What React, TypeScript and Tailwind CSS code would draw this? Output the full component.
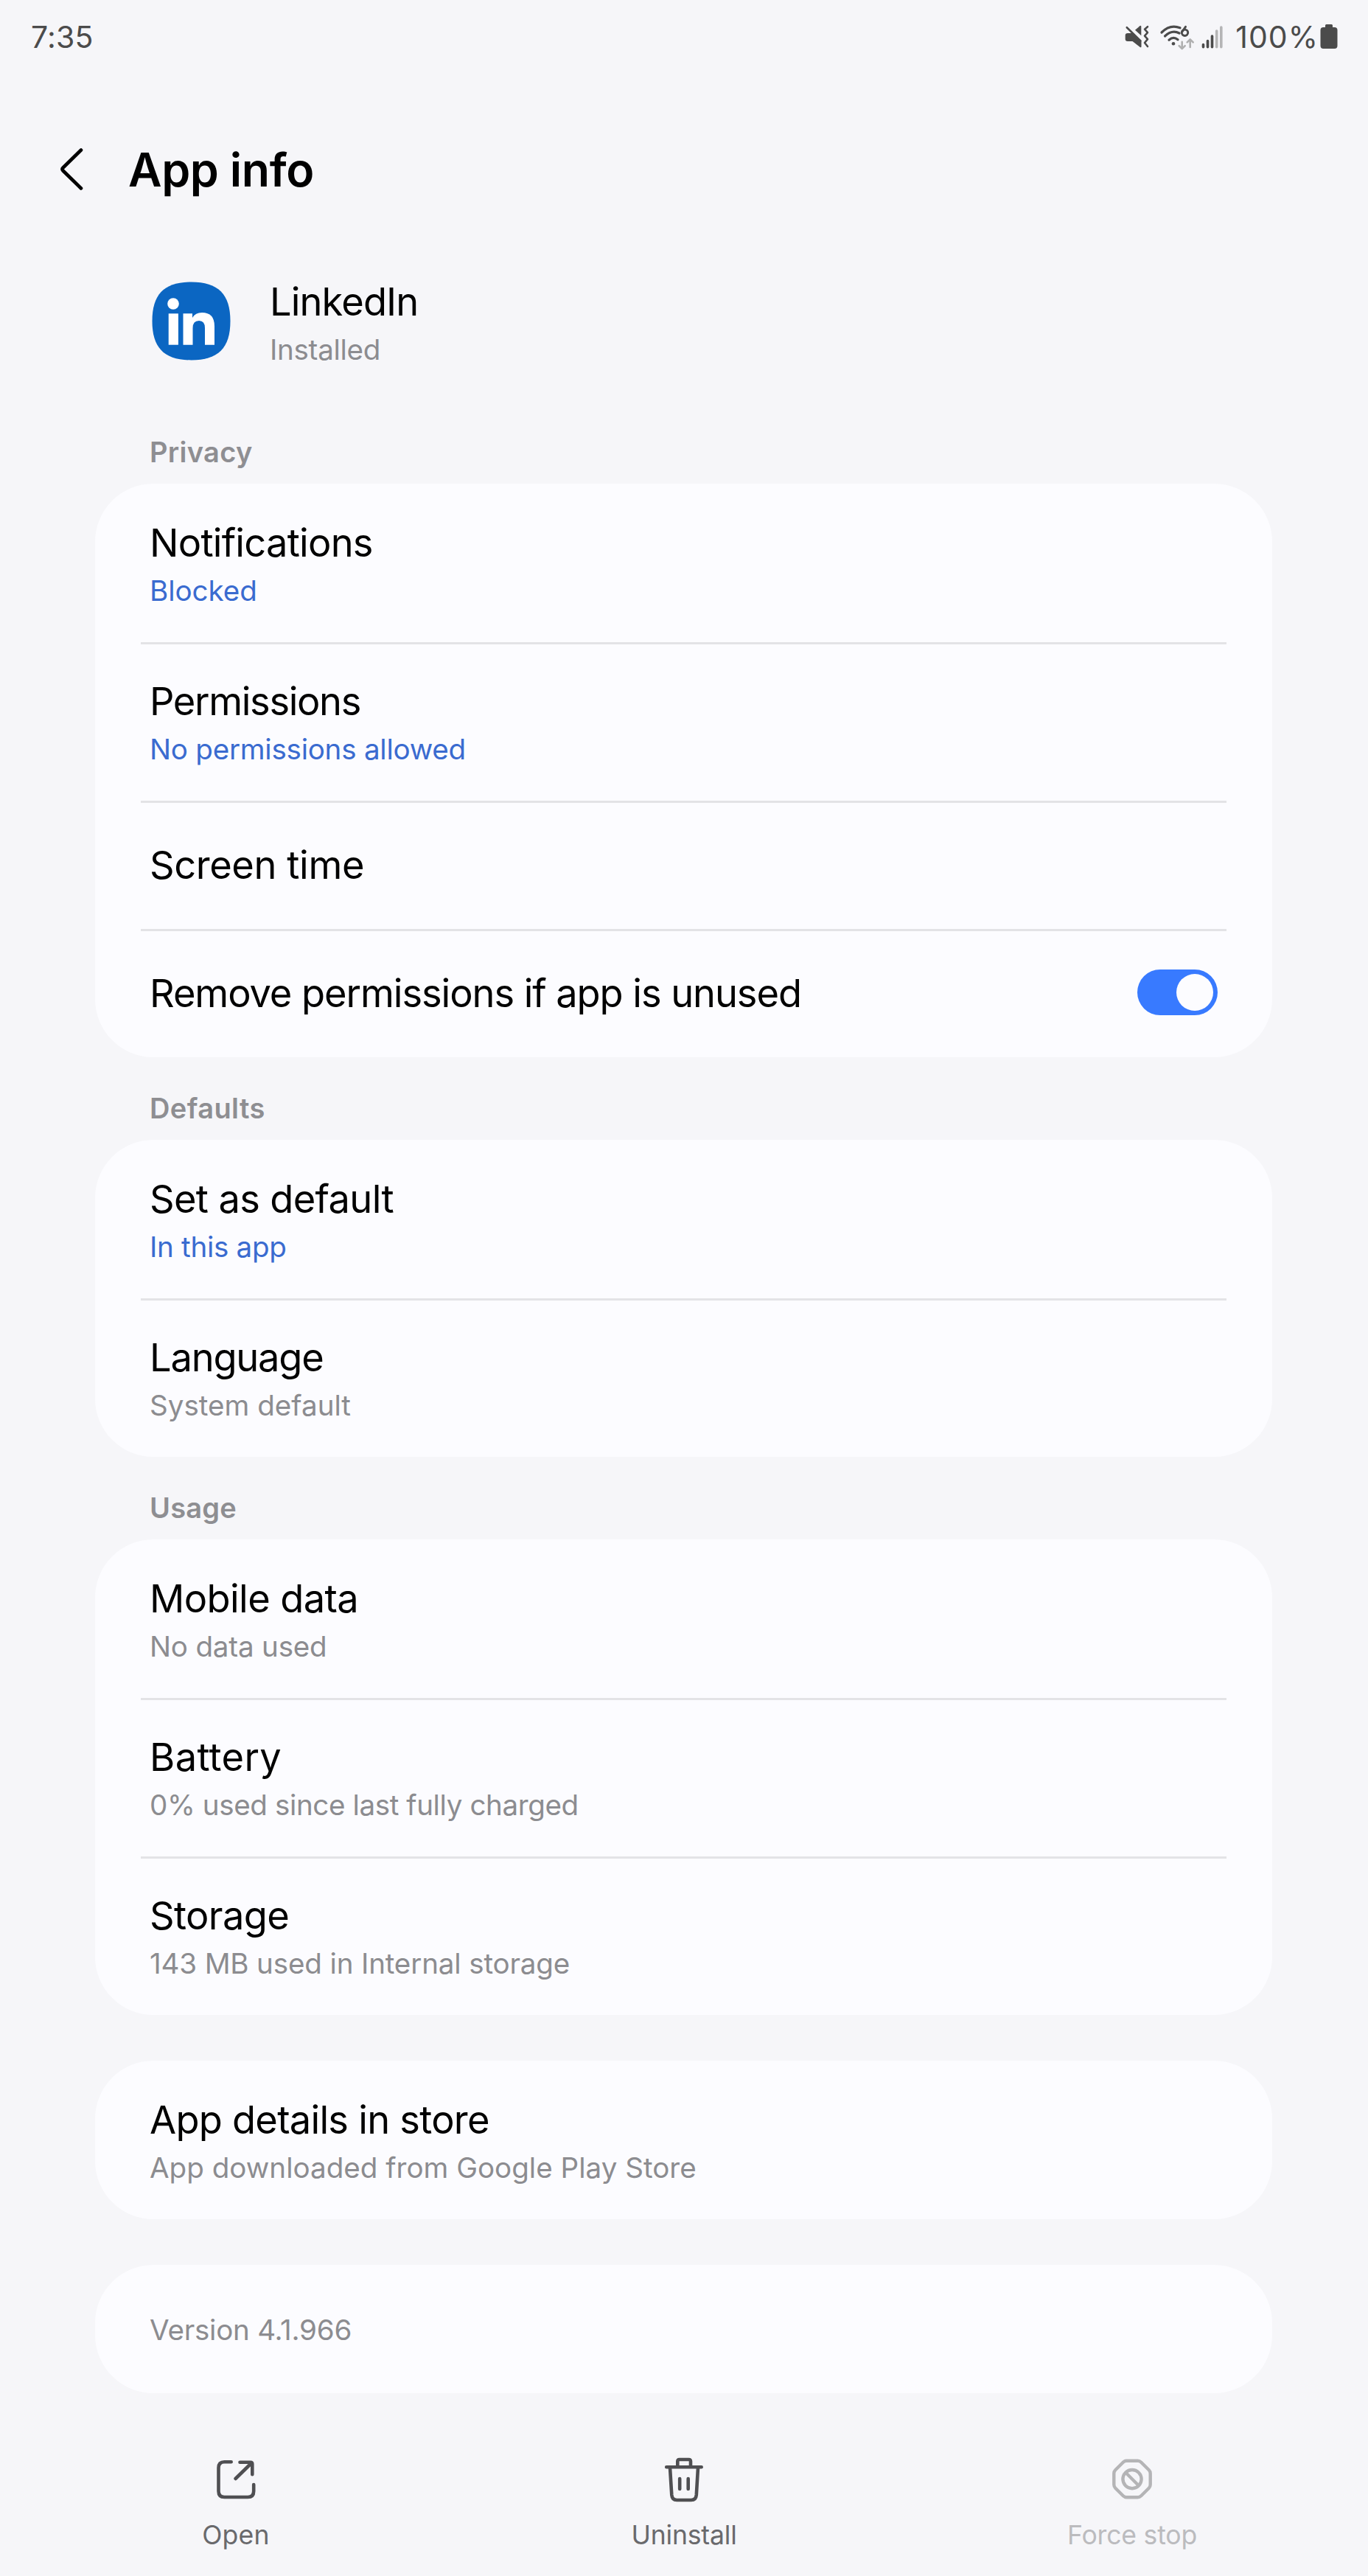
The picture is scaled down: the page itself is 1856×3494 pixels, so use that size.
import type { ReactNode } from "react";

type RowProps = {
  title: string;
  track?: string;
  sub?: string;
  subTrack?: string;
  accent?: boolean;
  first?: boolean;
  trailing?: ReactNode;
};

function Row({ title, track = "", sub, subTrack = "", accent, first, trailing }: RowProps) {
  return (
    <div className={`flex flex-col px-[62px] ${sub ? "h-[215px]" : "h-[174px]"}`}>
      <div className={`h-[3px] shrink-0 ${first ? "" : "bg-[#e3e3e6]"}`} />
      <div className={`flex items-start justify-between px-3 ${sub ? "pt-[45px]" : "pt-[52px]"}`}>
        <div>
          <div className={`text-[52.4px] leading-[64px] whitespace-nowrap text-black ${track}`}>{title}</div>
          {sub && (
            <div
              className={`mt-[9px] text-[38.6px] leading-[48px] whitespace-nowrap ${
                accent ? "text-[#3a6bd0]" : "text-[#8c8c90]"
              } ${subTrack}`}
            >
              {sub}
            </div>
          )}
        </div>
        {trailing}
      </div>
    </div>
  );
}

function Card({ children }: { children: ReactNode }) {
  return <section className="rounded-[79px] bg-[#fcfcff]">{children}</section>;
}

function SectionLabel({ children, track }: { children: ReactNode; track: string }) {
  return (
    <h2 className={`h-[112px] pt-[45px] pl-[74px] text-[38px] leading-[48px] font-semibold text-[#8e8e92] ${track}`}>
      {children}
    </h2>
  );
}

function Toggle() {
  return (
    <div className="flex h-[62px] w-[109px] items-center justify-end rounded-full bg-[#387aff] pr-[6px]">
      <div className="size-[50px] rounded-full bg-[#fcfcff]" />
    </div>
  );
}

function StatusIcons() {
  return (
    <svg width="140" height="40" viewBox="0 0 140 40" fill="none" strokeLinecap="round" strokeLinejoin="round">
      {/* muted speaker with vibration */}
      <path d="M4 15h6l12.500 11.500V33q0 1.800-1.700.9L10.500 26H4q-3.300 0-3.300-3v-5q0-3 3.300-3z" fill="#4b4b4b" />
      <path d="M14 10.700L20.500 5.300q1.800-1.200 1.800.9V18.300z" fill="#4b4b4b" />
      <path d="M2.800 7.200L21.500 25.500" stroke="#4b4b4b" strokeWidth="2.600" />
      <path d="M31 6.200L27 9.700 31 14.200 27 18.700 31 23.200 27 28 31 33" stroke="#4b4b4b" strokeWidth="2.600" />
      {/* wifi 6 */}
      <path d="M50 14Q61.500 2.500 75 7.800" stroke="#4b4b4b" strokeWidth="3.200" />
      <path d="M54.500 19Q64 10 74 15" stroke="#4b4b4b" strokeWidth="3.200" />
      <path d="M60 24.200Q66 19 72 23.700" stroke="#4b4b4b" strokeWidth="3.200" />
      <circle cx="66" cy="29.300" r="2.300" fill="#4b4b4b" />
      <circle cx="81.500" cy="14.300" r="4.200" stroke="#4b4b4b" strokeWidth="2.900" />
      <path d="M82.500 6.300l-4.500 6.500" stroke="#4b4b4b" strokeWidth="2.900" />
      <path d="M77.700 26.700v9M73.700 32.200l4 4 4-4M88.700 34v-9M84.700 27.300l4-4 4 4" stroke="#b0b0b0" strokeWidth="2.600" />
      {/* signal bars */}
      <path d="M106.500 30.500v3.300M112.500 25.500v8.300M118.500 19v14.800" stroke="#4b4b4b" strokeWidth="3.600" />
      <path d="M124.700 12v21.800M130.800 7v26.800" stroke="#b5b5b6" strokeWidth="3.600" />
    </svg>
  );
}

function Battery() {
  return (
    <svg width="24" height="34" viewBox="0 0 24 34" fill="#4b4b4b">
      <path d="M8.500 0h7q1.500 0 1.500 1.500V4h2.500q4 0 4 4v21q0 4-4 4h-15q-4 0-4-4V8q0-4 4-4H7V1.500Q7 0 8.500 0z" />
    </svg>
  );
}

function AppIcon() {
  return (
    <svg width="107" height="107" viewBox="0 0 107 107">
      <path
        d="M53.500 .5C90 .5 106.500 17 106.500 53.500S90 106.500 53.500 106.500 .5 90 .5 53.500 17 .5 53.500 .5z"
        fill="#0b66c2"
      />
      <g fill="#fff">
        <circle cx="29" cy="30" r="7.800" />
        <rect x="22.700" y="43.300" width="13.200" height="42.400" />
        <path d="M42.500 43.300h12.500v5.700q4-7 13-7 17 0 17 18.500v25.200H72V63q0-10-8-10-8.500 0-8.500 10v22.700H42.500z" />
      </g>
    </svg>
  );
}

function OpenIcon() {
  return (
    <svg width="64" height="64" viewBox="0 0 64 64" fill="none" stroke="#4f4f52" strokeWidth="4.600" strokeLinecap="round" strokeLinejoin="round">
      <path d="M25.700 8.300H16.500q-8 0-8 8v31.700q0 8 8 8h31.700q8 0 8-8V39" />
      <path d="M37.500 8.800h14.500q2.300 0 2.300 2.300v14.200M52.500 10.500L31.500 31" />
    </svg>
  );
}

function TrashIcon() {
  return (
    <svg width="64" height="64" viewBox="0 0 64 64" fill="none" stroke="#4f4f52" strokeWidth="4.600" strokeLinecap="round" strokeLinejoin="round">
      <path d="M8.200 15.200h47.500M23.300 14V7.500q0-2.500 2.500-2.500h12.700q2.500 0 2.500 2.500V14" />
      <path d="M13 16l2.300 37q.6 7 7 7h19.500q6.400 0 7-7L51 16" />
      <path d="M26.200 31v14M37.700 31v14" />
    </svg>
  );
}

function StopIcon() {
  return (
    <svg width="64" height="64" viewBox="0 0 64 64" fill="none" stroke="#b4b4b6" strokeWidth="4.400" strokeLinecap="round" strokeLinejoin="round">
      <path d="M24.500 6.800h15q2.800 0 4.700 1.900l10.600 10.600q1.900 1.900 1.900 4.700v15q0 2.800-1.900 4.700L44.200 54.300q-1.900 1.900-4.700 1.900h-15q-2.800 0-4.700-1.900L9.200 43.700q-1.900-1.900-1.900-4.700V24q0-2.800 1.900-4.700L19.800 8.700q1.900-1.900 4.700-1.900z" />
      <circle cx="32" cy="31.600" r="12.600" />
      <path d="M23.500 23l17 17" />
    </svg>
  );
}

function Action({ icon, label, tone }: { icon: ReactNode; label: string; tone: string }) {
  return (
    <div className="flex w-[608px] flex-col items-center">
      {icon}
      <span className={`mt-[22px] text-[35.6px] leading-[44px] whitespace-nowrap ${tone}`}>{label}</span>
    </div>
  );
}

export default function App() {
  return (
    <div className="flex h-[3494px] w-[1856px] flex-col bg-[#f6f6f9] font-['Inter',sans-serif]">
      <header className="flex h-[192px] items-start justify-between pt-[26px] pr-[41px] pl-[42px] text-[41px] leading-[48px] text-[#4b4b4b]">
        <span className="tracking-[0.2px]">7:35</span>
        <div className="flex items-start">
          <div className="mt-1 mr-[10px]">
            <StatusIcons />
          </div>
          <span className="tracking-[1px]">100%</span>
          <div className="mt-[7px] ml-[2px]">
            <Battery />
          </div>
        </div>
      </header>

      <div className="flex h-[76px] items-center pl-[79px]">
        <svg width="40" height="60" viewBox="0 0 40 60" fill="none" stroke="#000" strokeWidth="4.600" strokeLinecap="round" strokeLinejoin="round">
          <path d="M31 3.500L6.500 27.500q-2 2 0 4l24.500 24" />
        </svg>
        <h1 className="ml-[55px] text-[62.6px] leading-[76px] font-semibold tracking-[-0.4px] text-black">App info</h1>
      </div>

      <div className="flex h-[276px] items-start pt-[109px] pl-[206px]">
        <div className="mt-[5px]">
          <AppIcon />
        </div>
        <div className="ml-[53px]">
          <div className="text-[52.4px] leading-[64px] tracking-[-0.9px] text-black">LinkedIn</div>
          <div className="mt-[9px] text-[38.6px] leading-[48px] tracking-[-0.3px] text-[#8c8c90]">Installed</div>
        </div>
      </div>

      <main className="flex flex-col pr-[130px] pl-[129px]">
        <SectionLabel track="tracking-[0.3px]">Privacy</SectionLabel>
        <Card>
          <Row first title="Notifications" track="tracking-[-0.75px]" sub="Blocked" subTrack="tracking-[-0.05px]" accent />
          <Row title="Permissions" track="tracking-[-1.35px]" sub="No permissions allowed" subTrack="tracking-[-0.25px]" accent />
          <Row title="Screen time" track="tracking-[-0.4px]" />
          <Row title="Remove permissions if app is unused" track="tracking-[-1.07px]" trailing={<Toggle />} />
        </Card>
        <SectionLabel track="tracking-[0.4px]">Defaults</SectionLabel>
        <Card>
          <Row first title="Set as default" track="tracking-[-0.65px]" sub="In this app" subTrack="tracking-[-0.3px]" accent />
          <Row title="Language" track="tracking-[-1.2px]" sub="System default" />
        </Card>
        <SectionLabel track="tracking-[0.2px]">Usage</SectionLabel>
        <Card>
          <Row first title="Mobile data" track="tracking-[-0.6px]" sub="No data used" subTrack="tracking-[-0.2px]" />
          <Row title="Battery" track="tracking-[0.35px]" sub="0% used since last fully charged" subTrack="tracking-[-0.4px]" />
          <Row title="Storage" track="tracking-[-0.6px]" sub="143 MB used in Internal storage" subTrack="tracking-[-0.16px]" />
        </Card>
        <div className="mt-[62px]">
          <Card>
            <Row first title="App details in store" track="tracking-[-0.75px]" sub="App downloaded from Google Play Store" />
          </Card>
        </div>
        <div className="mt-[62px]">
          <Card>
            <div className="h-[174px] pt-[64px] pl-[74px] text-[38.6px] leading-[48px] tracking-[-0.25px] text-[#8c8c90]">
              Version 4.1.966
            </div>
          </Card>
        </div>
      </main>

      <footer className="flex justify-center pt-[85px]">
        <Action icon={<OpenIcon />} label="Open" tone="text-[#69696c] tracking-[0.2px]" />
        <Action icon={<TrashIcon />} label="Uninstall" tone="text-[#69696c] tracking-[-0.2px]" />
        <Action icon={<StopIcon />} label="Force stop" tone="text-[#bbbbbe] tracking-[-0.2px]" />
      </footer>
    </div>
  );
}
